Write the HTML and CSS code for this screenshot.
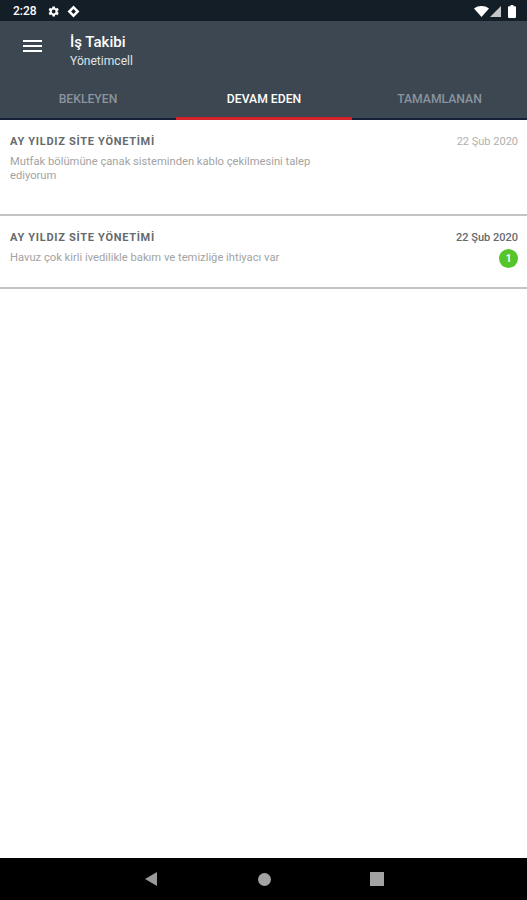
FILE: index.html
```html
<!DOCTYPE html>
<html lang="tr">
  <head>
    <meta charset="UTF-8" />
    <title>İş Takibi</title>
    <meta name="viewport" content="width=device-width, initial-scale=1" />
    <link rel="stylesheet" href="styles.css">
  </head>
  <body>
    <div class="screen">
      <div class="status-bar">
        <div class="status-left">
          <span class="clock">2:28</span>
          <svg class="status-icon" width="13" height="13" viewBox="0 0 24 24">
            <path fill="#fff" d="M19.4 13a7.5 7.5 0 0 0 0-2l2.3-1.7-2.3-4-2.6 1.1a7.500 7.500 0 0 0-1.800-1L14.600 2.600h-4.600L9.700 5.400a7.500 7.500 0 0 0-1.800 1L5.300 5.300l-2.300 4L5.200 11a7.500 7.500 0 0 0 0 2l-2.200 1.700 2.300 4 2.600-1.100a7.500 7.500 0 0 0 1.800 1l.3 2.800h4.600l.3-2.800a7.500 7.500 0 0 0 1.800-1l2.600 1.100 2.300-4zM12.300 15.500a3.500 3.500 0 1 1 0-7 3.500 3.500 0 0 1 0 7z"/>
          </svg>
          <svg class="status-icon" width="13" height="13" viewBox="0 0 24 24">
            <path fill="#fff" fill-rule="evenodd" d="M12 1l11 11-11 11L1 12zM12 7.500L7.500 12l4.500 4.500 4.500-4.500z"/>
          </svg>
        </div>
        <div class="status-right">
          <svg width="15" height="11" viewBox="0 0 15 11"><path fill="#fff" d="M0 2.500C4 -.8 11 -.8 15 2.500L7.500 11z"/></svg>
          <svg width="11" height="11" viewBox="0 0 11 11"><path fill="#fff" opacity=".75" d="M0 11L11 0v11z"/></svg>
          <svg class="battery" width="8" height="13" viewBox="0 0 8 13"><path fill="#fff" d="M2.500 0h3v1.200H7a1 1 0 0 1 1 1V12a1 1 0 0 1-1 1H1a1 1 0 0 1-1-1V2.200a1 1 0 0 1 1-1h1.500z"/></svg>
        </div>
      </div>

      <header class="toolbar">
        <div class="title-row">
          <div class="menu-btn"><span></span><span></span><span></span></div>
          <div class="titles">
            <div class="title">İş Takibi</div>
            <div class="subtitle">Yönetimcell</div>
          </div>
        </div>
        <nav class="tabs">
          <div class="tab">BEKLEYEN</div>
          <div class="tab active">DEVAM EDEN</div>
          <div class="tab">TAMAMLANAN</div>
        </nav>
      </header>

      <main class="list">
        <div class="job job-tall">
          <div class="job-head">
            <div class="job-name">AY YILDIZ SİTE YÖNETİMİ</div>
            <div class="job-date">22 Şub 2020</div>
          </div>
          <div class="job-text">Mutfak bölümüne çanak sisteminden kablo çekilmesini talep ediyorum</div>
        </div>
        <div class="job">
          <div class="job-head">
            <div class="job-name">AY YILDIZ SİTE YÖNETİMİ</div>
            <div class="job-date unread">22 Şub 2020</div>
          </div>
          <div class="job-body">
            <div class="job-text">Havuz çok kirli ivedilikle bakım ve temizliğe ihtiyacı var</div>
            <div class="badge">1</div>
          </div>
        </div>
      </main>

      <footer class="nav-bar">
        <svg width="14" height="16" viewBox="0 0 14 16"><path fill="#9a9a9a" d="M13 1v14L1 8z"/></svg>
        <span class="nav-home"></span>
        <span class="nav-recent"></span>
      </footer>
    </div>
  </body>
</html>
```

FILE: styles.css
```css
:root {
  --toolbar: #3c4751;
  --status: #141e27;
  --red: #d3242c;
  --muted: #a3a3a3;
  --text-dark: #666a6e;
}
* {
  box-sizing: border-box;
}
body {
  margin: 0;
  font-family: Roboto, sans-serif;
  background: #fff;
}
.screen {
  display: flex;
  flex-direction: column;
  height: 900px;
  overflow: hidden;
}

/* status bar */
.status-bar {
  height: 21px;
  flex: none;
  background: var(--status);
  color: #fff;
  display: flex;
  justify-content: space-between;
  align-items: center;
  padding: 1px 11px 0 13px;
}
.status-left,
.status-right {
  display: flex;
  align-items: center;
}
.clock {
  font-size: 12px;
  font-weight: 500;
  width: 34px;
}
.status-left .status-icon {
  margin-right: 7px;
}
.status-right {
  gap: 1px;
}
.battery {
  margin-left: 6px;
}

/* toolbar + tabs */
.toolbar {
  height: 99px;
  flex: none;
  background: var(--toolbar);
  display: flex;
  flex-direction: column;
  justify-content: space-between;
  border-bottom: 2px solid #17203a;
}
.title-row {
  display: flex;
  padding: 12px 0 0 23px;
}
.menu-btn {
  width: 19px;
  display: flex;
  flex-direction: column;
  gap: 3px;
  margin: 7px 28px 0 0;
}
.menu-btn span {
  height: 2px;
  background: #fff;
}
.title {
  color: #fff;
  font-size: 15px;
  font-weight: 500;
  line-height: 19px;
}
.subtitle {
  color: #dfe3e6;
  font-size: 12.1px;
  line-height: 17px;
  margin-top: 1px;
}
.tabs {
  display: grid;
  grid-template-columns: 176px 176px 175px;
  margin-bottom: -2px;
}
.tab {
  height: 37px;
  padding-top: 9px;
  text-align: center;
  color: #8b949c;
  font-size: 12.2px;
  font-weight: 500;
  border-bottom: 3px solid transparent;
}
.tab.active {
  color: #fff;
  border-bottom-color: var(--red);
}

/* job list */
.list {
  flex: 1;
}
.job {
  height: 73px;
  padding: 14px 9px 0 10px;
  border-bottom: 2px solid #c4c4c4;
}
.job-tall {
  height: 96px;
}
.job-head {
  display: flex;
  justify-content: space-between;
  align-items: center;
  height: 14px;
}
.job-name {
  color: var(--text-dark);
  font-size: 11px;
  font-weight: 700;
  letter-spacing: 0.7px;
}
.job-date {
  color: #b0b0b0;
  font-size: 11px;
}
.job-date.unread {
  color: var(--text-dark);
  font-weight: 500;
}
.job-text {
  color: var(--muted);
  font-size: 11.2px;
  line-height: 14px;
  width: 320px;
  margin-top: 7px;
}
.job-body {
  display: flex;
  justify-content: space-between;
  align-items: flex-start;
}
.badge {
  width: 19px;
  height: 19px;
  margin-top: 5px;
  border-radius: 50%;
  background: #56c42b;
  color: #fff;
  font-size: 10px;
  font-weight: 700;
  line-height: 19px;
  text-align: center;
}

/* android nav */
.nav-bar {
  height: 42px;
  flex: none;
  background: #000;
  display: flex;
  align-items: center;
  padding: 0 143px 0 144px;
  justify-content: space-between;
}
.nav-home {
  width: 13px;
  height: 13px;
  border-radius: 50%;
  background: var(--muted);
}
.nav-recent {
  width: 14px;
  height: 14px;
  background: var(--muted);
}
```
